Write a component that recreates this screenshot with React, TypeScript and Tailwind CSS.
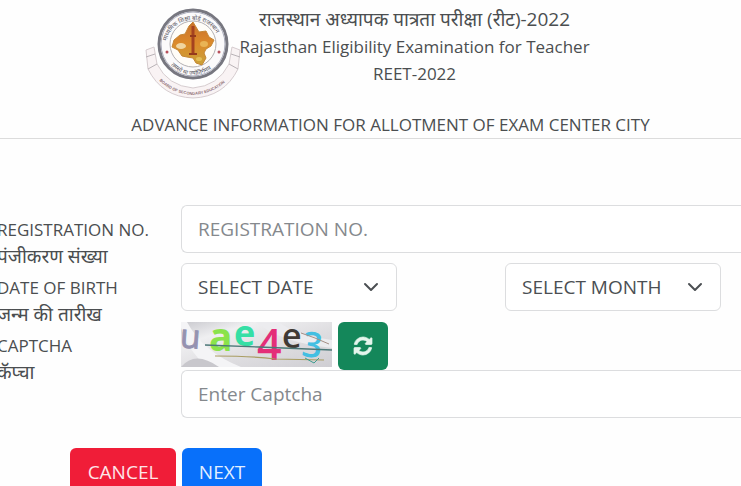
import type { ReactNode } from "react";

function Emblem() {
  return (
    <svg viewBox="0 0 100 94" className="-mr-1 h-[94px] w-[100px] shrink-0" role="img" aria-label="Board emblem">
      <defs>
        <path id="ringTop" d="M23 41 A27 27 0 1 1 77 41" />
        <path id="ringBottom" d="M20 39 A30 30 0 0 0 80 39" />
        <path id="ribbonText" d="M9 65 Q22 87 50 89 Q78 87 91 65" />
        <linearGradient id="mapFill" x1="0" y1="0" x2="0" y2="1">
          <stop offset="0" stopColor="#c9702c" />
          <stop offset="0.5" stopColor="#dc8a2a" />
          <stop offset="1" stopColor="#c9a238" />
        </linearGradient>
      </defs>
      <path d="M3 44 L11 41 L14 58 Q25 80 50 82 Q75 80 86 58 L89 41 L97 44 L95 63 Q81 91 50 92 Q19 91 5 63 Z" fill="#f9f3f4" stroke="#d6cccf" strokeWidth="1" />
      <path d="M3 51 L12 48 M97 51 L88 48 M5 63 L14 58 M95 63 L86 58" fill="none" stroke="#b9b3b7" strokeWidth="1" />
      <text fontSize="4" fontWeight="700" fill="#8f7076" fontFamily="Liberation Sans, sans-serif">
        <textPath href="#ribbonText" startOffset="12">BOARD OF SECONDARY EDUCATION</textPath>
      </text>
      <circle cx="50" cy="38" r="34" fill="#fbfafb" stroke="#777780" strokeWidth="3" />
      <circle cx="50" cy="38" r="32" fill="none" stroke="#a9abba" strokeWidth="1" />
      <circle cx="50" cy="38" r="23" fill="#fffdf8" stroke="#b3b0b2" strokeWidth="1" />
      <text fontSize="6" fill="#55535c" fontFamily="Noto Sans Devanagari, Noto Sans, sans-serif">
        <textPath href="#ringTop" startOffset="6">माध्यमिक शिक्षा बोर्ड राजस्थान</textPath>
      </text>
      <text fontSize="6" fill="#55535c" fontFamily="Noto Sans Devanagari, Noto Sans, sans-serif">
        <textPath href="#ringBottom" startOffset="22">तमसो मा ज्योतिर्गमय</textPath>
      </text>
      <path d="M46 20 L50 16 L53 21 L56 26 L63 25 L66 31 L71 34 L68 40 L63 43 L61 47 L63 52 L59 59 L53 57 L50 52 L44 51 L39 50 L35 44 L29 41 L31 34 L37 29 L42 28 Z" fill="url(#mapFill)" stroke="#c58634" strokeWidth="1" />
      <ellipse cx="38" cy="40" rx="5" ry="3" fill="#f0d5a0" />
      <ellipse cx="61" cy="38" rx="4" ry="3" fill="#e9b455" />
      <ellipse cx="56" cy="53" rx="3" ry="2" fill="#e3bd55" />
      <path d="M50 20 V49" stroke="#a5421f" strokeWidth="3" />
      <path d="M47 30 H53 M46 48 H54" stroke="#95391c" strokeWidth="2" />
      <circle cx="24" cy="46" r="1.5" fill="#b84f5b" />
      <circle cx="76" cy="46" r="1.5" fill="#b84f5b" />
    </svg>
  );
}

function CaptchaPicture() {
  return (
    <svg viewBox="0 0 151 45" className="h-[45px] w-[151px] shrink-0" role="img" aria-label="Captcha: uae4e3">
      <defs>
        <linearGradient id="noise" x1="0" y1="0" x2="1" y2="1">
          <stop offset="0" stopColor="#c9c9ce" />
          <stop offset="0.25" stopColor="#efeff1" />
          <stop offset="0.6" stopColor="#dedde0" />
          <stop offset="1" stopColor="#cfced3" />
        </linearGradient>
      </defs>
      <rect width="151" height="45" fill="url(#noise)" />
      <path d="M6 0 Q22 30 60 45 H26 Q8 30 0 6 V0Z" fill="#f4f4f6" />
      <path d="M75 0 Q98 20 151 26 V18 Q112 12 98 0Z" fill="#ececef" />
      <path d="M0 45 Q14 28 38 45Z" fill="#c8c7cc" />
      <g fontFamily="Open Sans, Noto Sans, sans-serif" fontWeight="700">
        <text x="-1" y="26" fontSize="33" fontWeight="400" fill="#9592b0" stroke="#9592b0" transform="rotate(4 8 20)">u</text>
        <text x="28" y="29" fontSize="39" fill="#8ae34b">a</text>
        <text x="53" y="24" fontSize="36" fill="#35dfa5">e</text>
        <text x="76" y="38" fontSize="43" fontWeight="600" fill="#e42e78">4</text>
        <text x="101" y="26" fontSize="34" fontWeight="600" fill="#403a35">e</text>
        <text x="121" y="35" fontSize="35" fontWeight="600" fill="#43bfe2" transform="rotate(8 130 25)">3</text>
      </g>
      <path d="M24 23 L78 25 L151 28" fill="none" stroke="#4b7777" strokeWidth="1.3" />
      <path d="M34 34 Q70 34 94 37 L143 38" fill="none" stroke="#a99d62" strokeWidth="1.2" />
      <path d="M120 11 L134 16 L148 22" fill="none" stroke="#a58f86" strokeWidth="1" />
      <path d="M124 36 L133 41 L138 36" fill="none" stroke="#3e9c8f" strokeWidth="1" />
    </svg>
  );
}

function RefreshIcon() {
  return (
    <svg viewBox="0 0 1536 1536" className="size-[18px] overflow-visible" fill="currentColor" stroke="currentColor" strokeWidth="60" aria-hidden="true">
      <path d="M1511 928q0 5-1 7-64 268-268 434.500T764 1536q-146 0-282.500-55T238 1324l-129 129q-19 19-45 19t-45-19-19-45V960q0-26 19-45t45-19h448q26 0 45 19t19 45-19 45l-137 137q71 66 161 102t187 36q134 0 250-65t186-179q11-17 53-117 8-23 30-23h192q13 0 22.500 9.500T1511 928zm25-800v448q0 26-19 45t-45 19h-448q-26 0-45-19t-19-45 19-45l138-138Q969 256 768 256q-134 0-250 65T332 500q-11 17-53 117-8 23-30 23H50q-13 0-22.500-9.500T18 608v-7q65-268 270-434.500T768 0q146 0 284 55.500T1297 212l130-129q19-19 45-19t45 19 19 45z" />
    </svg>
  );
}

function FieldLabel({ id, children, hindi }: { id: string; children: ReactNode; hindi: string }) {
  return (
    <label htmlFor={id} className="block whitespace-nowrap leading-[26px]">
      <span className="block text-[17px] leading-[26px]">{children}</span>
      <span className="block text-[19px] leading-[26px]">{hindi}</span>
    </label>
  );
}

function Dropdown({ id, label, options }: { id: string; label: string; options: string[] }) {
  return (
    <div className="relative w-[216px] shrink-0">
      <select
        id={id}
        aria-label={label}
        defaultValue=""
        className="h-12 w-full appearance-none rounded-md border border-[#dcdddf] bg-white pr-10 pl-4 text-[#4b4f53]"
      >
        <option value="">{label}</option>
        {options.map((option) => (
          <option key={option}>{option}</option>
        ))}
      </select>
      <svg viewBox="0 0 16 16" className="pointer-events-none absolute top-4 right-[18px] size-4" fill="none" stroke="#4b4f53" strokeWidth="2" strokeLinecap="round" strokeLinejoin="round" aria-hidden="true">
        <path d="M2 5l6 6 6-6" />
      </svg>
    </div>
  );
}

const days = Array.from({ length: 31 }, (_, i) => String(i + 1));
const months = ["January", "February", "March", "April", "May", "June", "July", "August", "September", "October", "November", "December"];
const inputStyle = "block h-12 w-full rounded-l-md border border-r-0 border-[#dcdddf] bg-white px-4 text-[#4b4f53] placeholder:text-[#85898d]";

export default function App() {
  return (
    <main className="overflow-hidden bg-[#fefefe] font-['Open_Sans','Noto_Sans_Devanagari','Noto_Sans',sans-serif] text-[19px] text-[#4b4e50]">
      <header className="border-b border-[#dcdcdc]">
        <div className="flex justify-center pt-1.5 pr-2">
          <Emblem />
          <div className="text-center text-[17px] leading-[27px]">
            <p className="text-[19px] leading-[27px]">राजस्थान अध्यापक पात्रता परीक्षा (रीट)-2022</p>
            <p>Rajasthan Eligibility Examination for Teacher</p>
            <p>REET-2022</p>
          </div>
        </div>
        <h1 className="pt-3 pl-10 text-center text-[17px] leading-[26px]">
          ADVANCE INFORMATION FOR ALLOTMENT OF EXAM CENTER CITY
        </h1>
      </header>

      <form className="pt-[66px]" onSubmit={(event) => event.preventDefault()}>
        <div className="flex">
          <div className="-ml-[3px] flex w-46 shrink-0 flex-col gap-1.5 pt-3">
            <FieldLabel id="registration" hindi="पंजीकरण संख्या">REGISTRATION NO.</FieldLabel>
            <FieldLabel id="birth-date" hindi="जन्म की तारीख">DATE OF BIRTH</FieldLabel>
            <FieldLabel id="captcha" hindi="कॅप्चा">CAPTCHA</FieldLabel>
          </div>
          <div className="min-w-0 flex-1">
            <input id="registration" type="text" placeholder="REGISTRATION NO." className={inputStyle} />
            <div className="flex justify-between pt-2.5 pr-5">
              <Dropdown id="birth-date" label="SELECT DATE" options={days} />
              <Dropdown id="birth-month" label="SELECT MONTH" options={months} />
            </div>
            <div className="flex gap-1.5 pt-[11px]">
              <CaptchaPicture />
              <button type="button" aria-label="Refresh captcha" className="flex h-12 w-[50px] items-center justify-center rounded-md bg-[#14875a] text-[#e4f5ec]">
                <RefreshIcon />
              </button>
            </div>
            <input id="captcha" type="text" placeholder="Enter Captcha" className={inputStyle} />
          </div>
        </div>
        <div className="flex gap-1.5 pt-[30px] pl-[70px]">
          <button type="button" className="h-12 w-[106px] rounded-t-md bg-[#f01d38] text-[#fde5e8]">CANCEL</button>
          <button type="submit" className="h-12 w-20 rounded-t-md bg-[#0870fa] text-[#e2efff]">NEXT</button>
        </div>
      </form>
    </main>
  );
}
